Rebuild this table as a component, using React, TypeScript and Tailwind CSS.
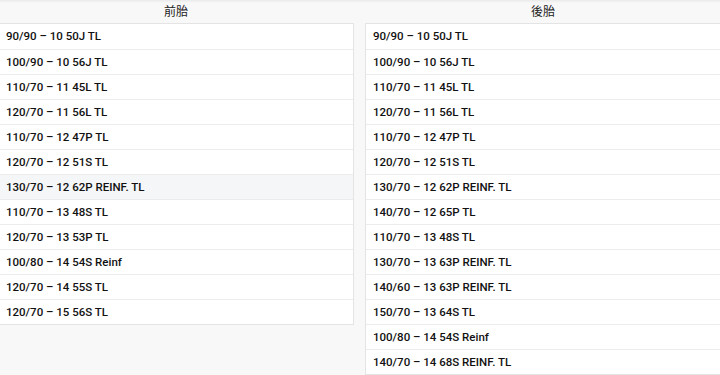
import React from "react";

const front = [
  "90/90 – 10 50J TL",
  "100/90 – 10 56J TL",
  "110/70 – 11 45L TL",
  "120/70 – 11 56L TL",
  "110/70 – 12 47P TL",
  "120/70 – 12 51S TL",
  "130/70 – 12 62P REINF. TL",
  "110/70 – 13 48S TL",
  "120/70 – 13 53P TL",
  "100/80 – 14 54S Reinf",
  "120/70 – 14 55S TL",
  "120/70 – 15 56S TL",
];

const rear = [
  "90/90 – 10 50J TL",
  "100/90 – 10 56J TL",
  "110/70 – 11 45L TL",
  "120/70 – 11 56L TL",
  "110/70 – 12 47P TL",
  "120/70 – 12 51S TL",
  "130/70 – 12 62P REINF. TL",
  "140/70 – 12 65P TL",
  "110/70 – 13 48S TL",
  "130/70 – 13 63P REINF. TL",
  "140/60 – 13 63P REINF. TL",
  "150/70 – 13 64S TL",
  "100/80 – 14 54S Reinf",
  "140/70 – 14 68S REINF. TL",
];

function Column({ title, items, hl }: { title: string; items: string[]; hl?: number }) {
  return (
    <div className="flex-1 flex flex-col">
      <div className="h-[23px] flex items-center justify-center text-[12px] text-[#222] pt-[1px]">
        {title}
      </div>
      <div className="bg-white border border-[#e4e4e4]">
        {items.map((t, i) => (
          <div
            key={i}
            className={`h-[25px] flex items-center pl-[7px] pt-[1px] text-[11.5px] font-medium text-[#111] ${
              i > 0 ? "border-t border-[#ececec]" : ""
            } ${i === hl ? "bg-[#f5f6f7]" : ""}`}
            style={{ fontFamily: 'Roboto, "Liberation Sans", sans-serif' }}
          >
            {t}
          </div>
        ))}
      </div>
    </div>
  );
}

export default function App() {
  return (
    <div
      className="w-[720px] h-[375px] overflow-hidden bg-[#f8f8f8] shadow-[inset_0_3px_3px_-2px_rgba(0,0,0,0.08)]"
      style={{ fontFamily: '"Liberation Sans", "Noto Sans CJK TC", sans-serif' }}
    >
      <div className="flex gap-[11px] w-[723px] -ml-[2px] items-start">
        <Column title="前胎" items={front} hl={6} />
        <Column title="後胎" items={rear} />
      </div>
    </div>
  );
}
